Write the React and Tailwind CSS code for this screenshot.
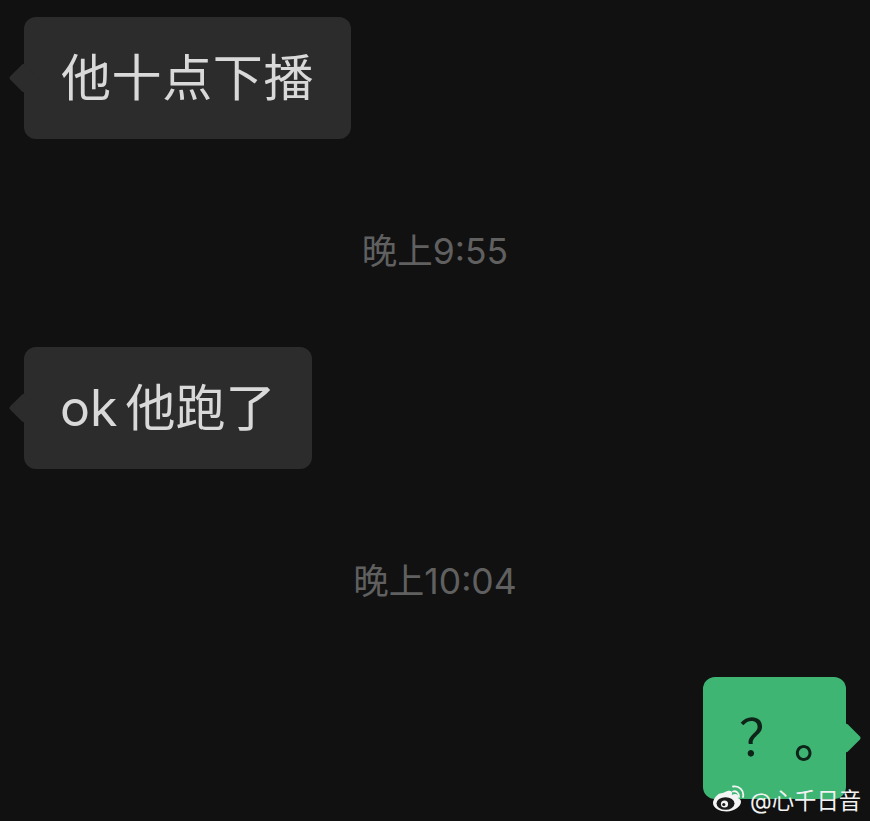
const font = "font-['Inter','Noto_Sans_CJK_SC',sans-serif]";

function Tail({ side, color }) {
  return (
    <div
      className={
        "absolute top-1/2 w-[21px] h-[21px] -translate-y-1/2 rotate-45 rounded-[2px] " +
        color +
        (side === "left" ? " left-[-11px]" : " right-[-11px]")
      }
    ></div>
  );
}

function Bubble({ children, side = "left", width }) {
  const color = side === "left" ? "bg-[#2c2c2c]" : "bg-[#3fb574]";
  return (
    <div className={"relative h-[122px] rounded-[12px] flex items-center " + width + " " + color}>
      <Tail side={side} color={color} />
      {children}
    </div>
  );
}

function Time({ children }) {
  return (
    <div className="mt-[93px] mb-[75px] h-[40px] flex items-center justify-center text-[35.5px] leading-none text-[#606060]">
      {children}
    </div>
  );
}

function WeiboLogo() {
  return (
    <svg width="33" height="30" viewBox="0 0 33 30" fill="none">
      <path
        d="M12 8.500c3.500-2.200 6.500-2.300 7.600-1 .7.900.6 2.200.1 3.500 2.800-1.200 5.200-1.200 6.100.1.600.9.500 1.900 0 2.900 2 .7 3.200 2 3.200 3.800 0 4.600-6.500 9.700-14.300 9.700C8 27.500 1 24.400 1 19c0-2.900 2.500-6.700 5.600-9C8.300 8.800 10.300 9.500 12 8.500z"
        fill="#f4f4f4"
      />
      <ellipse cx="13.500" cy="19.500" rx="9" ry="6.300" fill="#1a1a1a" />
      <circle cx="12.500" cy="20" r="3.600" fill="#f4f4f4" />
      <circle cx="11.800" cy="20.500" r="1.600" fill="#1a1a1a" />
      <path d="M21 7.500c3-1 6.500 1.500 6 5.500" stroke="#f4f4f4" strokeWidth="1.800" strokeLinecap="round" />
      <path d="M21 2.500c6-1.200 11.500 4 10 10.500" stroke="#f4f4f4" strokeWidth="1.800" strokeLinecap="round" />
    </svg>
  );
}

export default function App() {
  return (
    <div className={"relative w-[870px] h-[821px] overflow-hidden bg-[#111111] pt-[17px] " + font}>
      {/* first message */}
      <div className="pl-[24px]">
        <Bubble width="w-[327px]">
          <span className="pl-[37px] text-[50px] tracking-[0.6px] leading-none text-[#d9d9d9]">他十点下播</span>
        </Bubble>
      </div>

      <Time>晚上9:55</Time>

      {/* second message */}
      <div className="pl-[24px]">
        <Bubble width="w-[288px]">
          <span className="pl-[36px] text-[50px] leading-none text-[#d9d9d9] [word-spacing:-6px]">ok 他跑了</span>
        </Bubble>
      </div>

      <Time>晚上10:04</Time>

      {/* my message */}
      <div className="flex justify-end pr-[24px]">
        <Bubble side="right" width="w-[143px]">
          <span className="pl-[36px] text-[50px] leading-none text-[#0e2418]">
            ？<span className="relative top-[1px] ml-[5px] font-medium">。</span>
          </span>
        </Bubble>
      </div>

      {/* watermark */}
      <div className="absolute left-[712px] top-[784px] flex items-center gap-[5px]">
        <WeiboLogo />
        <span className="relative top-[2px] text-[22.4px] leading-none text-[#f2f2f2]">@心千日音</span>
      </div>
    </div>
  );
}
